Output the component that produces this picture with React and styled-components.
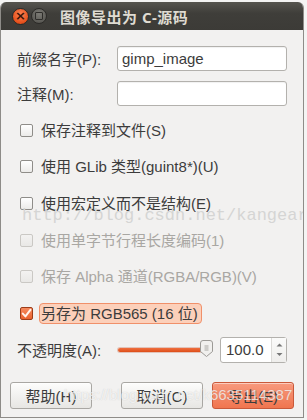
import React from 'react'
import styled, { createGlobalStyle } from 'styled-components'

const GlobalStyle = createGlobalStyle`
  html, body {
    margin: 0;
    padding: 0;
    background: #f4f4f3;
  }
  body {
    font-family: "Liberation Sans", "Noto Sans CJK SC", sans-serif;
    font-size: 15px;
    color: #3c3c3c;
  }
`

const options = [
  { label: '保存注释到文件(S)' },
  { label: '使用 GLib 类型(guint8*)(U)' },
  { label: '使用宏定义而不是结构(E)' },
  { label: '使用单字节行程长度编码(1)', disabled: true },
  { label: '保存 Alpha 通道(RGBA/RGB)(V)', disabled: true },
  { label: '另存为 RGB565 (16 位)', checked: true, focused: true }
]

const App = () => {
  return (
    <>
      <GlobalStyle />
      <Window>
        <TitleBar>
          <CloseButton>×</CloseButton>
          <MaxButton>
            <MaxSquare />
          </MaxButton>
          <Title>图像导出为 C-源码</Title>
        </TitleBar>

        <Body>
          <FormGrid>
            <FieldLabel>前缀名字(P):</FieldLabel>
            <Entry defaultValue='gimp_image' />
            <FieldLabel>注释(M):</FieldLabel>
            <Entry defaultValue='' />
          </FormGrid>

          <CheckList>
            {options.map(opt => (
              <CheckRow key={opt.label}>
                <Box checked={opt.checked} disabled={opt.disabled}>
                  {opt.checked && (
                    <svg width='11' height='11' viewBox='0 0 11 11'>
                      <path
                        d='M1.8 5.6 L4.4 8.4 L9.4 1.8'
                        fill='none'
                        stroke='#fff4ee'
                        strokeWidth='2'
                        strokeLinecap='round'
                        strokeLinejoin='round'
                      />
                    </svg>
                  )}
                </Box>
                <CheckLabel disabled={opt.disabled} focused={opt.focused}>
                  {opt.label}
                </CheckLabel>
              </CheckRow>
            ))}
          </CheckList>

          <SliderRow>
            <SliderLabel>不透明度(A):</SliderLabel>
            <Slider>
              <Track />
              <Handle>
                <svg width='13' height='17' viewBox='0 0 13 17'>
                  <path
                    d='M3 0.5 H10 Q12.5 0.5 12.5 3 V11.5 L6.5 16.5 L0.5 11.5 V3 Q0.5 0.5 3 0.5 Z'
                    fill='#f1f0ee'
                    stroke='#9c9a96'
                  />
                  <path d='M4.5 6 H8.5 M4.5 8 H8.5 M4.5 10 H8.5' stroke='#a8a6a2' strokeWidth='1' />
                </svg>
              </Handle>
            </Slider>
            <Spin>
              <SpinValue>100.0</SpinValue>
              <SpinArrows>
                <svg width='7' height='16' viewBox='0 0 7 16'>
                  <path d='M0.5 4.5 L3.5 1.5 L6.5 4.5 Z' fill='#777' />
                  <path d='M0.5 11 L3.5 14 L6.5 11 Z' fill='#777' />
                </svg>
              </SpinArrows>
            </Spin>
          </SliderRow>

          <ButtonRow>
            <Button>帮助(H)</Button>
            <Spacer />
            <Button>取消(C)</Button>
            <Button primary>导出(E)</Button>
          </ButtonRow>
        </Body>

        <BlogMark>http://blog.csdn.net/kangear</BlogMark>
        <CsdnMark>https://blog.csdn.net/k6635114387</CsdnMark>
      </Window>
    </>
  )
}

export default App

//styling

const Window = styled.div`
  position: relative;
  margin-top: 2px;
  width: 304px;
  box-sizing: border-box;
  background: #f2f1f0;
  border: 1px solid #8e8c88;
  border-top: none;
  border-radius: 6px 6px 0 0;
  overflow: hidden;
  display: flex;
  flex-direction: column;
`

const TitleBar = styled.div`
  height: 28px;
  margin: 0 -1px;
  background: linear-gradient(#56554f, #3f3e3a 40%, #3c3b37);
  display: flex;
  align-items: center;
  padding-left: 12px;
`

const CloseButton = styled.div`
  width: 17px;
  height: 17px;
  box-sizing: border-box;
  border-radius: 50%;
  background: radial-gradient(circle at 50% 35%, #fb8455, #e5501c 70%, #c94213);
  border: 1px solid #2c2b28;
  color: #3b1407;
  font-size: 13px;
  line-height: 14px;
  text-align: center;
  font-family: "DejaVu Sans", sans-serif;
  font-weight: bold;
`

const MaxButton = styled.div`
  width: 16px;
  height: 16px;
  margin-left: 2px;
  box-sizing: border-box;
  border-radius: 50%;
  background: radial-gradient(circle at 50% 35%, #7b7a74, #5c5b56 70%, #4d4c48);
  border: 1px solid #2c2b28;
  display: flex;
  align-items: center;
  justify-content: center;
`

const MaxSquare = styled.div`
  width: 6px;
  height: 6px;
  border: 1px solid #2e2d2a;
  border-radius: 1px;
`

const Title = styled.div`
  margin-left: 13px;
  font-family: "Noto Sans", "Noto Sans CJK SC", sans-serif;
  font-size: 15px;
  font-weight: bold;
  color: #dfdbd2;
  letter-spacing: 0.5px;
`

const Body = styled.div`
  display: flex;
  flex-direction: column;
  padding: 16px 16px 8px 16px;
`

const FormGrid = styled.div`
  display: grid;
  grid-template-columns: 100px 170px;
  row-gap: 10px;
  align-items: center;
`

const FieldLabel = styled.span`
  font-size: 15px;
`

const Entry = styled.input`
  height: 25px;
  box-sizing: border-box;
  border: 1px solid #b3b1ad;
  border-radius: 3px;
  background: #fff;
  box-shadow: inset 0 1px 1px rgba(0, 0, 0, 0.06);
  padding: 0 4px;
  font-family: "Liberation Sans", "Noto Sans CJK SC", sans-serif;
  font-size: 15px;
  color: #3c3c3c;
  outline: none;
`

const CheckList = styled.div`
  margin-top: 6px;
  display: flex;
  flex-direction: column;
`

const CheckRow = styled.div`
  height: 36.6px;
  display: flex;
  align-items: center;
`

const Box = styled.div`
  width: 13px;
  height: 13px;
  margin-left: 3px;
  box-sizing: border-box;
  border-radius: 2px;
  border: 1px solid ${p => (p.checked ? '#9d3d19' : p.disabled ? '#cac8c4' : '#8f8d89')};
  background: ${p =>
    p.checked
      ? 'linear-gradient(#f68a5e, #e9622f)'
      : p.disabled
      ? 'linear-gradient(#f3f2f1, #e9e8e6)'
      : 'linear-gradient(#ffffff, #ecebe9)'};
  display: flex;
  align-items: center;
  justify-content: center;
`

const CheckLabel = styled.span`
  font-size: 15px;
  line-height: 19px;
  color: ${p => (p.disabled ? '#a9a7a3' : '#3c3c3c')};
  margin-left: ${p => (p.focused ? '6px' : '8px')};
  padding: ${p => (p.focused ? '0 3px 0 1px' : '0')};
  background: ${p => (p.focused ? '#fcd0ba' : 'transparent')};
  border: ${p => (p.focused ? '1px solid #f0906a' : 'none')};
  border-radius: 4px;
`

const SliderRow = styled.div`
  margin-top: 5px;
  height: 26px;
  display: flex;
  align-items: center;
`

const SliderLabel = styled.span`
  width: 101px;
  font-size: 15px;
`

const Slider = styled.div`
  position: relative;
  width: 95px;
  height: 26px;
  display: flex;
  align-items: center;
`

const Track = styled.div`
  width: 88px;
  height: 4px;
  border-radius: 2px;
  background: linear-gradient(#f07040, #dd4e18);
  box-shadow: 0 0 0 1px rgba(180, 60, 20, 0.25);
`

const Handle = styled.div`
  position: absolute;
  left: 82px;
  top: 3px;
  width: 13px;
  height: 17px;
`

const Spin = styled.div`
  margin-left: 7px;
  width: 67px;
  height: 26px;
  box-sizing: border-box;
  border: 1px solid #b3b1ad;
  border-radius: 3px;
  background: #fff;
  display: flex;
`

const SpinValue = styled.span`
  flex: 1;
  padding-left: 5px;
  font-size: 15px;
  line-height: 24px;
  color: #3c3c3c;
`

const SpinArrows = styled.div`
  width: 14px;
  border-left: 1px solid #dcdbd8;
  background: linear-gradient(#fbfbfa, #efeeec);
  display: flex;
  align-items: center;
  justify-content: center;
`

const ButtonRow = styled.div`
  margin: 19px -7px 0 -7px;
  display: flex;
  gap: 9px;
`

const Spacer = styled.div`
  flex: 1;
`

const Button = styled.button`
  width: 82px;
  height: 27px;
  box-sizing: border-box;
  border-radius: 3px;
  border: 1px solid ${p => (p.primary ? '#c9593a' : '#a9a7a3')};
  background: ${p =>
    p.primary
      ? 'linear-gradient(#f89a7e, #f0754f)'
      : 'linear-gradient(#fdfdfc, #e7e6e3)'};
  box-shadow: inset 0 1px 0 rgba(255, 255, 255, 0.5);
  font-family: "Liberation Sans", "Noto Sans CJK SC", sans-serif;
  font-size: 15px;
  color: #3c3c3c;
  padding: 0;
`

const BlogMark = styled.div`
  position: absolute;
  left: 21px;
  top: 204px;
  font-family: "Liberation Mono", monospace;
  font-size: 17px;
  line-height: 20px;
  color: #d5d5d4;
  white-space: nowrap;
  pointer-events: none;
`

const CsdnMark = styled.div`
  position: absolute;
  left: 63px;
  top: 384px;
  font-family: "Liberation Sans", sans-serif;
  font-size: 15px;
  line-height: 18px;
  color: rgba(255, 255, 255, 0.72);
  text-shadow: 0 0 1px rgba(120, 120, 120, 0.35);
  white-space: nowrap;
  pointer-events: none;
`
